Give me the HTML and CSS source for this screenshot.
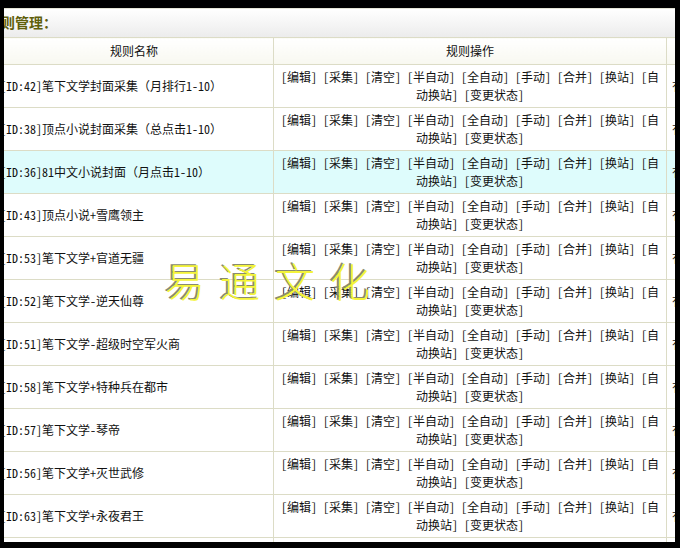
FILE: index.html
```html
<!DOCTYPE html>
<html lang="zh-CN">
<head>
    <meta charset="UTF-8">
    <title>采集规则管理</title>
    <link rel="stylesheet" href="styles.css">
</head>
<body>
    <div class="frame">
        <div class="screen">
            <div class="page">
                <div class="title">规则管理：</div>
                <table class="rules">
                    <tr class="head">
                        <td class="name">规则名称</td>
                        <td class="ops">规则操作</td>
                        <td class="state">规则状态</td>
                    </tr>
                    <tr>
                        <td class="name">[ID:42]笔下文学封面采集（月排行1-10）</td>
                        <td class="ops">[编辑] [采集] [清空] [半自动] [全自动] [手动] [合并] [换站] [自动换站] [变更状态]</td>
                        <td class="state">有效</td>
                    </tr>
                    <tr>
                        <td class="name">[ID:38]顶点小说封面采集（总点击1-10）</td>
                        <td class="ops">[编辑] [采集] [清空] [半自动] [全自动] [手动] [合并] [换站] [自动换站] [变更状态]</td>
                        <td class="state">有效</td>
                    </tr>
                    <tr class="hover">
                        <td class="name">[ID:36]81中文小说封面（月点击1-10）</td>
                        <td class="ops">[编辑] [采集] [清空] [半自动] [全自动] [手动] [合并] [换站] [自动换站] [变更状态]</td>
                        <td class="state">有效</td>
                    </tr>
                    <tr>
                        <td class="name">[ID:43]顶点小说+雪鹰领主</td>
                        <td class="ops">[编辑] [采集] [清空] [半自动] [全自动] [手动] [合并] [换站] [自动换站] [变更状态]</td>
                        <td class="state">有效</td>
                    </tr>
                    <tr>
                        <td class="name">[ID:53]笔下文学+官道无疆</td>
                        <td class="ops">[编辑] [采集] [清空] [半自动] [全自动] [手动] [合并] [换站] [自动换站] [变更状态]</td>
                        <td class="state">有效</td>
                    </tr>
                    <tr>
                        <td class="name">[ID:52]笔下文学-逆天仙尊</td>
                        <td class="ops">[编辑] [采集] [清空] [半自动] [全自动] [手动] [合并] [换站] [自动换站] [变更状态]</td>
                        <td class="state">有效</td>
                    </tr>
                    <tr>
                        <td class="name">[ID:51]笔下文学-超级时空军火商</td>
                        <td class="ops">[编辑] [采集] [清空] [半自动] [全自动] [手动] [合并] [换站] [自动换站] [变更状态]</td>
                        <td class="state">有效</td>
                    </tr>
                    <tr>
                        <td class="name">[ID:58]笔下文学+特种兵在都市</td>
                        <td class="ops">[编辑] [采集] [清空] [半自动] [全自动] [手动] [合并] [换站] [自动换站] [变更状态]</td>
                        <td class="state">有效</td>
                    </tr>
                    <tr>
                        <td class="name">[ID:57]笔下文学-琴帝</td>
                        <td class="ops">[编辑] [采集] [清空] [半自动] [全自动] [手动] [合并] [换站] [自动换站] [变更状态]</td>
                        <td class="state">有效</td>
                    </tr>
                    <tr>
                        <td class="name">[ID:56]笔下文学+灭世武修</td>
                        <td class="ops">[编辑] [采集] [清空] [半自动] [全自动] [手动] [合并] [换站] [自动换站] [变更状态]</td>
                        <td class="state">有效</td>
                    </tr>
                    <tr>
                        <td class="name">[ID:63]笔下文学+永夜君王</td>
                        <td class="ops">[编辑] [采集] [清空] [半自动] [全自动] [手动] [合并] [换站] [自动换站] [变更状态]</td>
                        <td class="state">有效</td>
                    </tr>
                    <tr>
                        <td class="name">[ID:64]笔下文学+大主宰</td>
                        <td class="ops">[编辑] [采集] [清空] [半自动] [全自动] [手动] [合并] [换站] [自动换站] [变更状态]</td>
                        <td class="state">有效</td>
                    </tr>
                </table>
            </div>
            <div class="watermark">易通文化</div>
        </div>
    </div>
</body>
</html>
```

FILE: styles.css
```css
body {
    margin: 0;
    background-color: #000;
    overflow: hidden;
    font-family: "Noto Sans Mono CJK SC", "Noto Sans CJK SC", monospace;
    font-size: 12px;
    color: #111;
}
.frame {
    padding: 8px 5px 6px 4px;
    height: 534px;
}
.screen {
    position: relative;
    height: 534px;
    overflow: hidden;
    background-color: #fff;
}
.page {
    margin-left: -20px;
    width: 780px;
}
.title {
    height: 28px;
    line-height: 27px;
    padding-left: 3px;
    border-top: 1px solid #e4e4d6;
    background: linear-gradient(#fff, #ececec);
    color: #5f5f0a;
    font-size: 14px;
    font-weight: bold;
}
.rules {
    margin-left: 10px;
    border-collapse: collapse;
    table-layout: fixed;
}
.rules td {
    border: 1px solid #dcdcc6;
    height: 42px;
    padding: 0 5px;
    line-height: 18px;
    vertical-align: middle;
}
.rules .head td {
    height: 26px;
    text-align: center;
    background: linear-gradient(#fff, #f8f8f0);
}
.rules .name {
    width: 268px;
}
.rules .ops {
    width: 382px;
    text-align: center;
}
.rules .state {
    width: 60px;
    text-align: left;
}
.rules .hover td {
    background: #defcfc;
}
.watermark {
    position: absolute;
    left: 161px;
    top: 243px;
    font-size: 40px;
    font-weight: 300;
    letter-spacing: 15px;
    color: #f4f43a;
    text-shadow: -2px -1px 0 #8a8a70;
    font-family: "Noto Sans CJK SC", sans-serif;
}
```
